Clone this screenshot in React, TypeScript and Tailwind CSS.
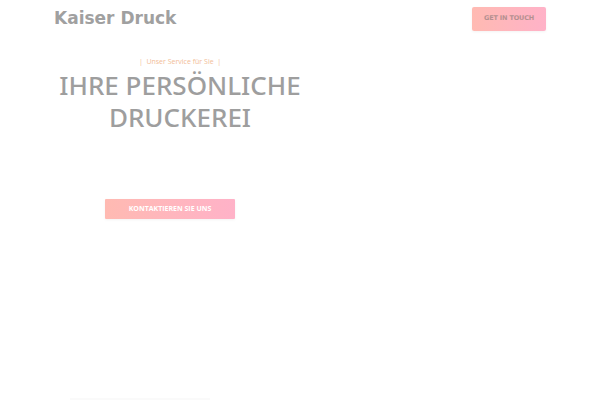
export default function App() {
  return (
    <div className="h-[400px] w-[600px] bg-white overflow-hidden flex flex-col font-['DejaVu_Sans',sans-serif]">
      {/* Header */}
      <div className="flex items-center justify-between pl-[54px] pr-[54px] pt-[7px]">
        <div className="text-[17px] font-bold text-[#a0a0a0] leading-none pt-[2px] pb-[4px]">Kaiser Druck</div>
        <button className="h-[24px] w-[74px] rounded-[2px] bg-gradient-to-r from-[#ffbab2] to-[#ffb2c8] text-[6.5px] font-bold text-[#b49090] tracking-tight shadow-[0_1px_3px_rgba(0,0,0,0.05)]">
          GET IN TOUCH
        </button>
      </div>

      {/* Hero */}
      <div className="ml-[54px] w-[252px] flex flex-col items-center mt-[26px]">
        <div className="text-[7px] leading-[10px] text-[#f2bd98] font-['Open_Sans',sans-serif]">| &nbsp;Unser Service für Sie&nbsp; |</div>
        <h1 className="mt-[2px] whitespace-nowrap text-center text-[26px] leading-[32px] font-medium text-[#9e9e9e] font-['Noto_Sans',sans-serif]">
          <span className="block">IHRE PERSÖNLICHE</span>
          <span className="block">DRUCKEREI</span>
        </h1>
        <button className="mt-[66px] mr-[20px] h-[20px] w-[130px] rounded-[1px] bg-gradient-to-r from-[#ffbab2] to-[#ffb2c8] text-[7px] font-bold text-white font-['Open_Sans',sans-serif] shadow-[0_1px_3px_rgba(0,0,0,0.05)]">
          KONTAKTIEREN SIE UNS
        </button>
      </div>

      <div className="mt-auto ml-[70px] h-[2px] w-[140px] bg-[#fafafa]" />
    </div>
  )
}
